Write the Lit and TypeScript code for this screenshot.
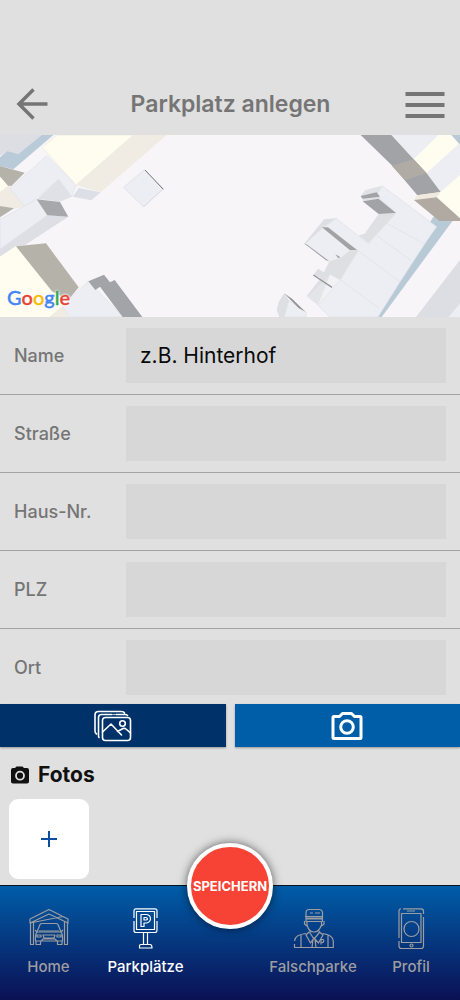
import { LitElement, html, css, svg } from "lit";
import { customElement } from "lit/decorators.js";

const FONT = css`Inter, Roboto, "Liberation Sans", sans-serif`;

@customElement("parking-map")
class ParkingMap extends LitElement {
  static styles = css`
    :host {
      display: block;
      position: relative;
      height: 182px;
      background: #f7f5f7;
      overflow: hidden;
    }
    .map {
      display: block;
      width: 100%;
      height: 100%;
    }
    .brand {
      position: absolute;
      left: 7px;
      bottom: 7px;
      font: 500 20px/26px Lato, ${FONT};
      -webkit-text-stroke: 0.4px currentColor;
      text-shadow: 0 0 2px #fff, 0 0 2px #fff, 0 0 3px #fff;
    }
    .b { color: #4285f4; }
    .r { color: #ea4335; }
    .y { color: #fbbc05; }
    .g { color: #34a853; }
  `;

  render() {
    return html`
      <svg class="map" viewBox="0 15 1380 546" preserveAspectRatio="xMidYMid slice" aria-hidden="true">
        <g stroke-width="2" stroke-linejoin="round">
          <path fill="#dcdee3" d="M0 15H125L55 72L22 63L0 78Z" />
          <path fill="#b9cad9" d="M125 15H160L40 118L0 108V82L22 63L55 72Z" />
          <path fill="#b5b2aa" d="M0 108L74 128L34 168H24L0 140Z" />
          <path fill="#fffdf0" d="M0 140L24 168L0 186Z" />
          <path fill="#f0ece3" d="M0 186L28 166L75 230L40 236L0 228Z" />
          <path fill="#b5b2aa" d="M0 228L42 235L0 262Z" />
          <path fill="#eceef3" stroke="#dfe1e7" d="M140 77L228 165L215 200L176 148L76 231L30 176Z" />
          <path fill="#dfe1e6" d="M176 148L215 200L180 215L112 206Z" />
          <path fill="#dcdfe6" d="M236 174L302 187L274 211L218 200Z" />
          <path fill="#f0ece4" d="M400 15H500L302 187L228 165Z" />
          <path fill="#fffdf0" stroke="#ece9dd" d="M172 15H400L228 165L127 52Z" />
          <path fill="#eceef3" stroke="#dfe1e7" d="M110 208L142 256L0 358V268Z" />
          <path fill="#dddfe5" d="M142 256L205 260L74 346L48 348L0 380V358Z" />
          <path fill="#a7a8ab" d="M110 208L180 216L205 260L142 256Z" />
          <path fill="#fffdf0" d="M0 380L48 349L156 484L196 535L160 561H0Z" />
          <path fill="#f0ece3" d="M148 561L190 525L205 561Z" />
          <path fill="#b5b2aa" d="M48 349L138 340L236 472L205 510L156 484Z" />
          <path fill="#eceef3" stroke="#dfe1e7" d="M265 454L370 561H208L186 528Z" />
          <path fill="#a3a4a8" d="M265 454L312 434L330 457L344 450L427 561H368L300 470L286 480Z" />
          <path fill="#d8dbe2" d="M490 178L432 231L423 223L485 172Z" />
          <path fill="#eceef3" stroke="#d8dbe2" d="M433 119L490 176L430 230L371 172Z" />
          <path fill="none" stroke="#77787c" stroke-width="3" d="M435 120L490 178" />
        </g>
        <g transform="translate(690 0)" stroke-width="2" stroke-linejoin="round">
          <path fill="#b9cad7" d="M610 260L668 272L455 561H430Z" />
          <path fill="#eceef3" d="M484 15H625L551 88Z" />
          <path fill="#fffdf0" d="M625 15H664L686 42L590 130L551 88Z" />
          <path fill="#b9cad7" d="M664 15H690V44Z" />
          <path fill="#eceef3" d="M686 42L690 45V135L630 186L590 130Z" />
          <path fill="#a2a3a7" d="M392 15H484L551 88L590 130L632 186L562 196L490 110Z" />
          <path fill="#b0aca5" d="M486 108L551 88L590 130L524 150Z" />
          <path fill="#fffdf0" d="M632 186L690 135V272L620 202Z" />
          <path fill="#f0e9dd" d="M562 196L632 186L620 202L552 210Z" />
          <path fill="#b0aaa3" d="M552 210L620 202L690 265V273H628Z" />
          <path fill="#e0e2e6" d="M392 198L406 180L456 167L446 188L452 206L400 213Z" />
          <path fill="#dfe0e4" d="M446 252L498 250L415 340L386 316L404 311Z" />
          <path fill="#eceef3" stroke="#dddfe5" d="M456 167L620 290L584 342L510 456L444 561H300L264 526L330 450L384 362L280 292L318 265L415 341L498 249L440 196Z" />
          <path fill="none" stroke="#dddfe5" d="M459 274L584 342M441 317L543 392M384 362L510 456M332 450L446 534" />
          <path fill="#a2a3a7" d="M392 198L440 187L450 200L398 206Z" />
          <path fill="#a2a3a7" d="M398 214L446 206L498 249L446 252Z" />
          <path fill="#dedfe3" d="M222 342L282 268L318 265L280 292L232 348Z" />
          <path fill="#eceef3" d="M280 292L362 358L325 386L298 394L226 342Z" />
          <path fill="#a2a3a7" d="M276 292L294 292L382 361L360 361Z" />
          <path fill="#a2a3a7" d="M222 340L232 344L298 394L288 391ZM316 373L332 382L324 384Z" />
          <path fill="#dedfe3" d="M298 394L330 384L360 361L384 362L330 450L300 434L264 526L230 498L272 445L250 435L264 416L282 427Z" />
          <path fill="#eceef3" d="M300 434L335 450L264 526L232 500Z" opacity=".4" />
          <path fill="none" stroke="#94959a" stroke-width="4" d="M250 435L306 472" />
          <path fill="#dedfe3" d="M162 490L146 516L140 540L148 561H165L180 515Z" />
          <path fill="#eceef3" stroke="#dddfe5" d="M176 512L228 546V561H162Z" />
          <path fill="#929398" d="M162 490L186 506L226 545L206 534Z" />
          <path fill="#dddee3" d="M690 390V530L668 561H558Z" />
          <path fill="#eceef3" d="M690 520V561H656Z" />
        </g>
      </svg>
      <div class="brand"><span class="b">G</span><span class="r">o</span><span class="y">o</span><span class="b">g</span><span class="g">l</span><span class="r">e</span></div>
    `;
  }
}

const garage = svg`
  <path d="M2 15V11L21 1.500L34 8M35 8.500L40 11V15L21 6L2 15Z" />
  <path d="M2.500 15V36.500H5.500V14M39.500 15V36.500H36.500V14" />
  <path d="M9 24L12 16.500Q12.500 15.500 14 15.500H28Q29.500 15.500 30 16.500L33 24M11 23H31M7 22L9 24M35 22L33 24" />
  <path d="M9 24H33Q35 26 34.500 33H7.500Q7 26 9 24ZM8 33V36.500H12.500V33M29.500 33V36.500H34V33M15 27H27L26 30H16ZM9 27H13V29H9ZM29 27H33V29H29ZM13 33L15 31H27L29 33" />`;

const sign = svg`
  <path d="M19 .8H30Q32 .8 32 2.800V10M32 13V22Q32 24.500 30 24.500H11Q9 24.500 9 22.500V13M9 10V3Q9 .8 11 .8H19" />
  <path d="M11.500 3.500H29.500V21.500H11.500ZM18.500 24.500V36.500M22.500 24.500V36.500" />
  <path d="M16 18.500V6.500H21.500Q25.500 7 25.500 11Q25 14.500 21.500 15H19V18.500ZM19 12V9.500H21Q22.500 10 22.500 11Q22.200 12 21 12Z" />
  <path d="M14.500 40V37.500Q15 36.500 16 36.500H25.500Q27 37 27 40Z" />`;

const guard = svg`
  <path d="M14 11V5Q14 1.500 17 1.500H27Q30.500 1.500 30.500 5V11M18 5H21M23 5H28M13 8.500H31M14 11H30.500V13.500H14ZM14 10H30.500" />
  <path d="M15 13.500V17Q17 24 22 24T29.500 17V13.500M12.500 13V16L15 18M32 13V16L29.500 18" />
  <path d="M18 22.500V25L22 31L27 25V22.500M17 24L14 27L18.500 35L22 30L26.500 35L31 27L27.500 24M21 31L20 39.500M23 31L24 39.500" />
  <path d="M14 25.500Q3 26.500 2.500 33M2.500 36V39.500H41.300V33Q41 27 30.500 25.500M9 27V39.500M36 27V39.500M29 36.500V31.500H31Q32.500 32.500 31 34.500H29" />`;

const phone = svg`
  <path d="M13 .8H31Q33.500 .8 33.500 3V6M33.500 9V38Q33.500 40.500 31 40.500H11.500Q9 40.500 9 38V33M9 30V3Q9 .8 11 .8" />
  <path d="M11.500 5.500H31V34.500H11.500ZM17 3H25" />
  <circle cx="21.500" cy="21" r="7.500" />
  <circle cx="21.500" cy="37.500" r="1.500" />`;

@customElement("app-root")
class AppRoot extends LitElement {
  static styles = css`
    :host {
      display: flex;
      flex-direction: column;
      min-height: 100vh;
      background: #e0e0e0;
      color: #757575;
      font-family: ${FONT};
    }
    * { box-sizing: border-box; }
    button {
      border: 0;
      padding: 0;
      font-family: inherit;
      color: inherit;
      background: none;
      cursor: pointer;
    }
    svg { display: block; }
    .header {
      display: flex;
      align-items: center;
      justify-content: space-between;
      padding: 72px 15px 0 16px;
      height: 135px;
    }
    .side {
      display: flex;
      width: 40px;
    }
    .title {
      margin: 0;
      font-size: 23px;
      line-height: 32px;
      font-weight: 600;
    }
    .row {
      display: flex;
      align-items: center;
      padding: 11px 14px;
      border-bottom: 1px solid #a3a3a3;
    }
    .row:last-child {
      border-bottom: 0;
      padding-bottom: 9px;
    }
    .label {
      flex: 0 0 112px;
      font-size: 18px;
      line-height: 24px;
      font-weight: 500;
    }
    .input {
      flex: 1;
      min-width: 0;
      height: 55px;
      padding: 0 14px;
      border: 0;
      border-radius: 0;
      outline: 0;
      background: #d7d7d7;
      color: #000;
      font: 400 21px/24px ${FONT};
    }
    .input::placeholder {
      color: #0a0a0a;
      opacity: 1;
    }
    .actions {
      display: grid;
      grid-template-columns: 1fr 1fr;
      gap: 9px;
    }
    .action {
      display: flex;
      align-items: center;
      justify-content: center;
      height: 43px;
      color: #fff;
      box-shadow: 0 1px 2px #0005;
    }
    .gallery { background: #003269; }
    .camera { background: #005da8; }
    .photos { padding: 16px 9px 6px; }
    .heading {
      display: flex;
      align-items: center;
      gap: 8px;
      margin: 0 0 12px;
      color: #111;
      font-size: 21px;
      line-height: 24px;
      font-weight: 700;
    }
    .add {
      display: flex;
      align-items: center;
      justify-content: center;
      width: 80px;
      height: 80px;
      border-radius: 9px;
      background: #fff;
      color: #0d4da1;
    }
    .nav {
      position: relative;
      display: grid;
      grid-template-columns: 97fr 97fr 70fr 98fr 98fr;
      height: 115px;
      margin-top: auto;
      border-top: 1px solid #07121f;
      background: linear-gradient(#005da8, #0b1054);
    }
    .tab {
      display: flex;
      flex-direction: column;
      align-items: center;
      gap: 7px;
      padding-top: 22px;
      color: #9d9da0;
      font-size: 15px;
      line-height: 20px;
      font-weight: 500;
      text-decoration: none;
    }
    .right { grid-column-start: 4; }
    .active { color: #fff; }
    .save {
      position: absolute;
      left: 50%;
      top: 0;
      width: 86px;
      height: 86px;
      transform: translate(-50%, -50%);
      border: 4px solid #fff;
      border-radius: 50%;
      background: #f64336;
      box-shadow: 0 0 10px #0009;
      color: #fff;
      font-size: 13px;
      font-weight: 700;
    }
  `;

  private fields = [
    { id: "name", label: "Name", hint: "z.B. Hinterhof" },
    { id: "street", label: "Straße", hint: "" },
    { id: "number", label: "Haus-Nr.", hint: "" },
    { id: "zip", label: "PLZ", hint: "" },
    { id: "city", label: "Ort", hint: "" },
  ];

  private tabs = [
    { label: "Home", icon: garage, cls: "tab" },
    { label: "Parkplätze", icon: sign, cls: "tab active" },
    { label: "Falschparke", icon: guard, cls: "tab right" },
    { label: "Profil", icon: phone, cls: "tab" },
  ];

  render() {
    return html`
      <header class="header">
        <button class="side" aria-label="Zurück">
          <svg width="32" height="32" viewBox="0 0 32 32" fill="none" stroke="currentColor" stroke-width="3.500">
            <path d="M17.500 1.500L3 16L17.500 30.500M3 16H31.500" />
          </svg>
        </button>
        <h1 class="title">Parkplatz anlegen</h1>
        <button class="side" aria-label="Menü">
          <svg width="40" height="28" viewBox="0 0 40 28" fill="none" stroke="currentColor" stroke-width="4">
            <path d="M.5 4H39.500M.5 15H39.500M.5 26H39.500" />
          </svg>
        </button>
      </header>
      <parking-map></parking-map>
      <form class="form">
        ${this.fields.map(
          (f) => html`<div class="row">
            <label class="label" for=${f.id}>${f.label}</label>
            <input class="input" id=${f.id} type="text" placeholder=${f.hint} />
          </div>`
        )}
      </form>
      <div class="actions">
        <button class="action gallery" aria-label="Galerie">
          <svg width="38" height="32" viewBox="0 0 38 32" fill="none" stroke="currentColor" stroke-width="1.600" stroke-linecap="round" stroke-linejoin="round">
            <rect x="8.500" y="7.500" width="28" height="23" rx="3" />
            <path d="M5 27.500Q4.500 27 4.500 25V7.500Q4.500 4.500 7.500 4.500H18M22 4.500H31Q33 4.500 33.500 5.500M2.500 24Q1 23 1 21V5Q1 1.500 4.500 1.500H27Q30 1.500 30.500 3M20 4.500H20.100" />
            <path d="M8.500 22L17 14L27.500 25M23.500 21.500L29 18.500Q31 18 32 19L36.500 23" />
            <circle cx="28.500" cy="13.500" r="2.800" />
          </svg>
        </button>
        <button class="action camera" aria-label="Kamera">
          <svg width="32" height="30" viewBox="0 0 32 30" fill="none" stroke="currentColor" stroke-width="3" stroke-linejoin="round">
            <path d="M3 5.500H8.500L11.500 2.500H20.500L23.500 5.500H29Q30 5.500 30 6.500V26.500Q30 27.500 29 27.500H3Q2 27.500 2 26.500V6.500Q2 5.500 3 5.500Z" />
            <circle cx="16" cy="16" r="6.300" />
          </svg>
        </button>
      </div>
      <section class="photos">
        <h2 class="heading">
          <svg width="21" height="18" viewBox="0 0 21 18" aria-hidden="true">
            <path fill="currentColor" d="M4 2H6L7.500 .5H13.500L15 2H18Q20 2 20 4V15.500Q20 17.500 18 17.500H4Q2 17.500 2 15.500V4Q2 2 4 2Z" />
            <circle cx="11" cy="9.700" r="4" fill="#111" stroke="#e0e0e0" stroke-width="1.800" />
          </svg>
          Fotos
        </h2>
        <button class="add" aria-label="Foto hinzufügen">
          <svg width="16" height="16" viewBox="0 0 16 16" fill="none" stroke="currentColor" stroke-width="2">
            <path d="M8 0V16M0 8H16" />
          </svg>
        </button>
      </section>
      <nav class="nav">
        ${this.tabs.map(
          (t) => html`<a class=${t.cls} href="#">
            <svg width="42" height="42" viewBox="0 0 42 42" fill="none" stroke="currentColor" stroke-width="1.200" stroke-linejoin="round" aria-hidden="true">
              ${t.icon}
            </svg>
            ${t.label}
          </a>`
        )}
        <button class="save">SPEICHERN</button>
      </nav>
    `;
  }
}
